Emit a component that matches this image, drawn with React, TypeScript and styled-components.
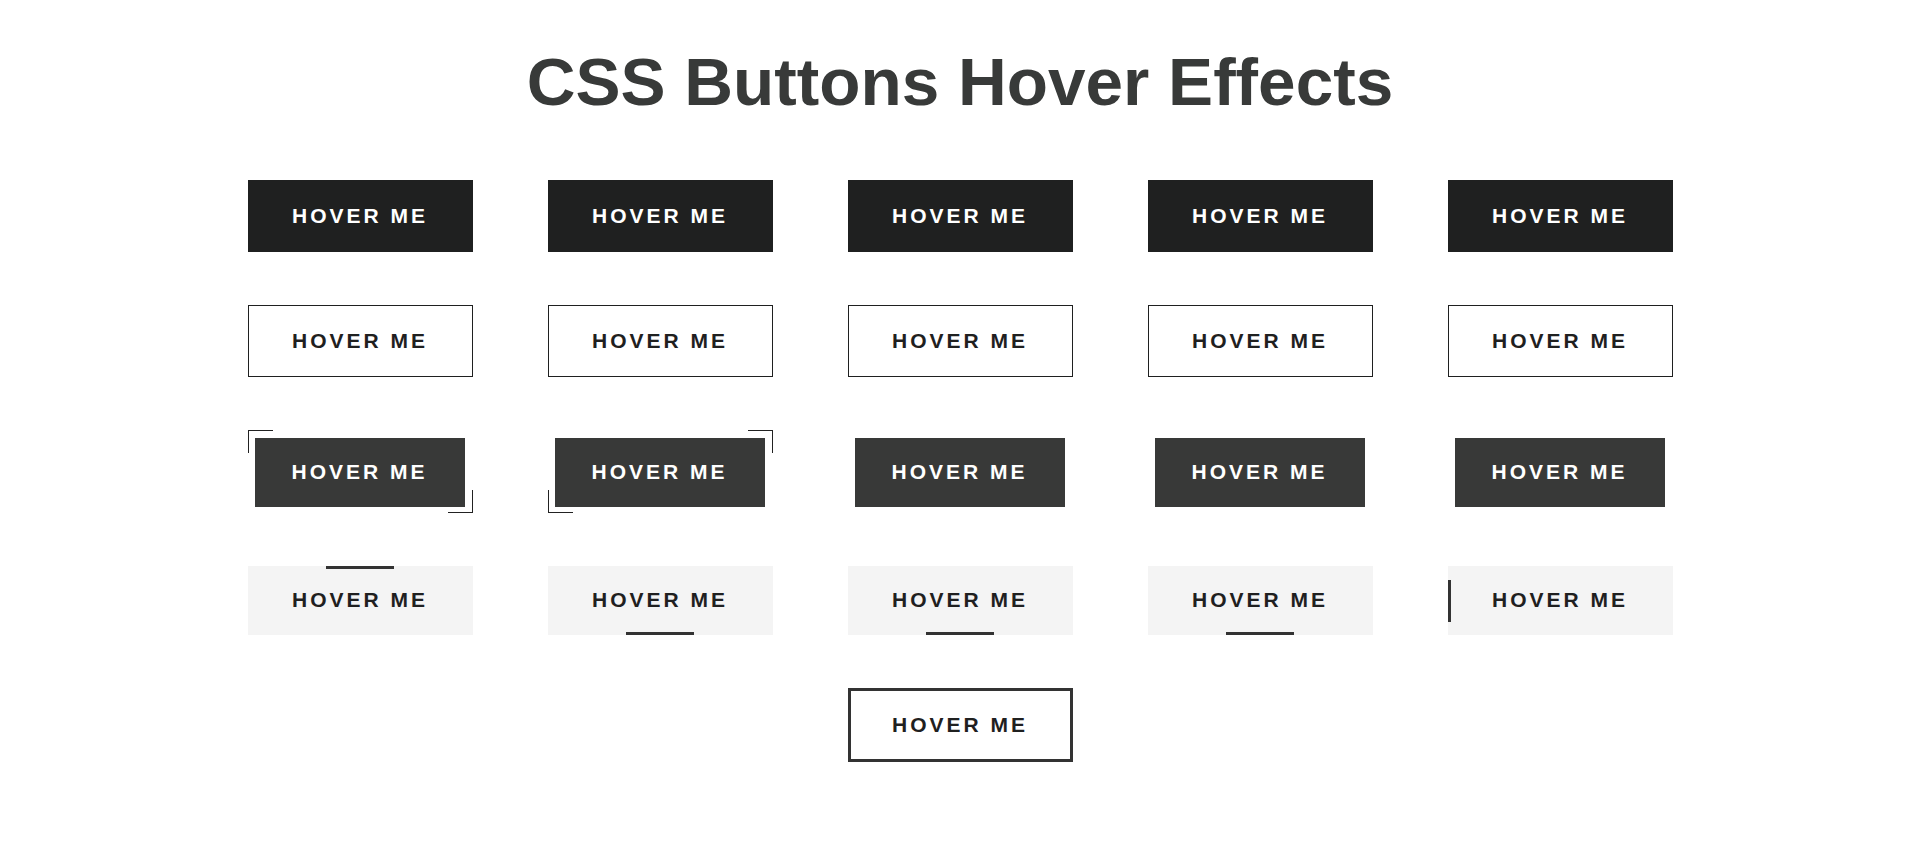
import styled, { createGlobalStyle, css } from 'styled-components';

const GlobalStyle = createGlobalStyle`
  body {
    margin: 0;
    background: #fff;
    font-family: 'Liberation Sans', Arial, sans-serif;
  }
`;

const Page = styled.div`
  display: flex;
  flex-direction: column;
  align-items: center;
  min-height: 100vh;
`;

const Title = styled.h1`
  margin: 42px 0 58px 0;
  font-size: 67.5px;
  line-height: 80px;
  font-weight: 700;
  color: #383a39;
`;

const Grid = styled.div`
  display: grid;
  grid-template-columns: repeat(5, 225px);
  column-gap: 75px;
  row-gap: 53px;
  padding-bottom: 60px;
`;

const label = css`
  display: flex;
  align-items: center;
  justify-content: center;
  box-sizing: border-box;
  font-family: 'Liberation Sans', Arial, sans-serif;
  font-size: 21px;
  font-weight: 700;
  letter-spacing: 3px;
  text-transform: uppercase;
  line-height: 1;
  padding-bottom: 2px;
  cursor: pointer;
`;

const SolidButton = styled.div`
  ${label};
  height: 72px;
  background: #1f2020;
  color: #fff;
`;

const OutlineButton = styled.div`
  ${label};
  height: 72px;
  background: #fff;
  color: #1f2020;
  border: 1px solid #1f2020;
`;

type Corners = 'tl-br' | 'tr-bl' | 'none';

const cornerBox = css`
  content: '';
  position: absolute;
  width: 24px;
  height: 22px;
  border: 0 solid #222;
`;

const BracketFrame = styled.div<{ $corners: Corners }>`
  position: relative;
  height: 83px;
  box-sizing: border-box;
  padding: 8px 8px 6px 7px;

  ${({ $corners }) =>
    $corners === 'tl-br' &&
    css`
      &::before {
        ${cornerBox};
        top: 0;
        left: 0;
        border-top-width: 1px;
        border-left-width: 1px;
      }
      &::after {
        ${cornerBox};
        bottom: 0;
        right: 0;
        border-bottom-width: 1px;
        border-right-width: 1px;
      }
    `}

  ${({ $corners }) =>
    $corners === 'tr-bl' &&
    css`
      &::before {
        ${cornerBox};
        top: 0;
        right: 0;
        border-top-width: 1px;
        border-right-width: 1px;
      }
      &::after {
        ${cornerBox};
        bottom: 0;
        left: 0;
        border-bottom-width: 1px;
        border-left-width: 1px;
      }
    `}
`;

const BracketButton = styled.div`
  ${label};
  height: 100%;
  background: #383938;
  color: #fff;
`;

type BarSide = 'top' | 'bottom' | 'left';

const BarButton = styled.div<{ $bar: BarSide }>`
  ${label};
  position: relative;
  height: 69px;
  background: #f4f4f4;
  color: #1f2020;

  &::after {
    content: '';
    position: absolute;
    background: #333;
    ${({ $bar }) =>
      $bar === 'left'
        ? css`
            left: 0;
            top: 50%;
            width: 3px;
            height: 42px;
            transform: translateY(-50%);
          `
        : css`
            left: 50%;
            width: 68px;
            height: 3px;
            transform: translateX(-50%);
            ${$bar === 'top' ? 'top: 0;' : 'bottom: 0;'}
          `}
  }
`;

const ThickButton = styled.div`
  ${label};
  grid-column: 3;
  height: 74px;
  background: #fff;
  color: #1f2020;
  border: 3px solid #333;
`;

const TEXT = 'Hover me';
const five = [0, 1, 2, 3, 4];
const corners: Corners[] = ['tl-br', 'tr-bl', 'none', 'none', 'none'];
const bars: BarSide[] = ['top', 'bottom', 'bottom', 'bottom', 'left'];

export default function App() {
  return (
    <Page>
      <GlobalStyle />
      <Title>CSS Buttons Hover Effects</Title>
      <Grid>
        {five.map((i) => (
          <SolidButton key={`s${i}`}>{TEXT}</SolidButton>
        ))}
        {five.map((i) => (
          <OutlineButton key={`o${i}`}>{TEXT}</OutlineButton>
        ))}
        {corners.map((c, i) => (
          <BracketFrame key={`b${i}`} $corners={c}>
            <BracketButton>{TEXT}</BracketButton>
          </BracketFrame>
        ))}
        {bars.map((b, i) => (
          <BarButton key={`r${i}`} $bar={b}>
            {TEXT}
          </BarButton>
        ))}
        <ThickButton>{TEXT}</ThickButton>
      </Grid>
    </Page>
  );
}
